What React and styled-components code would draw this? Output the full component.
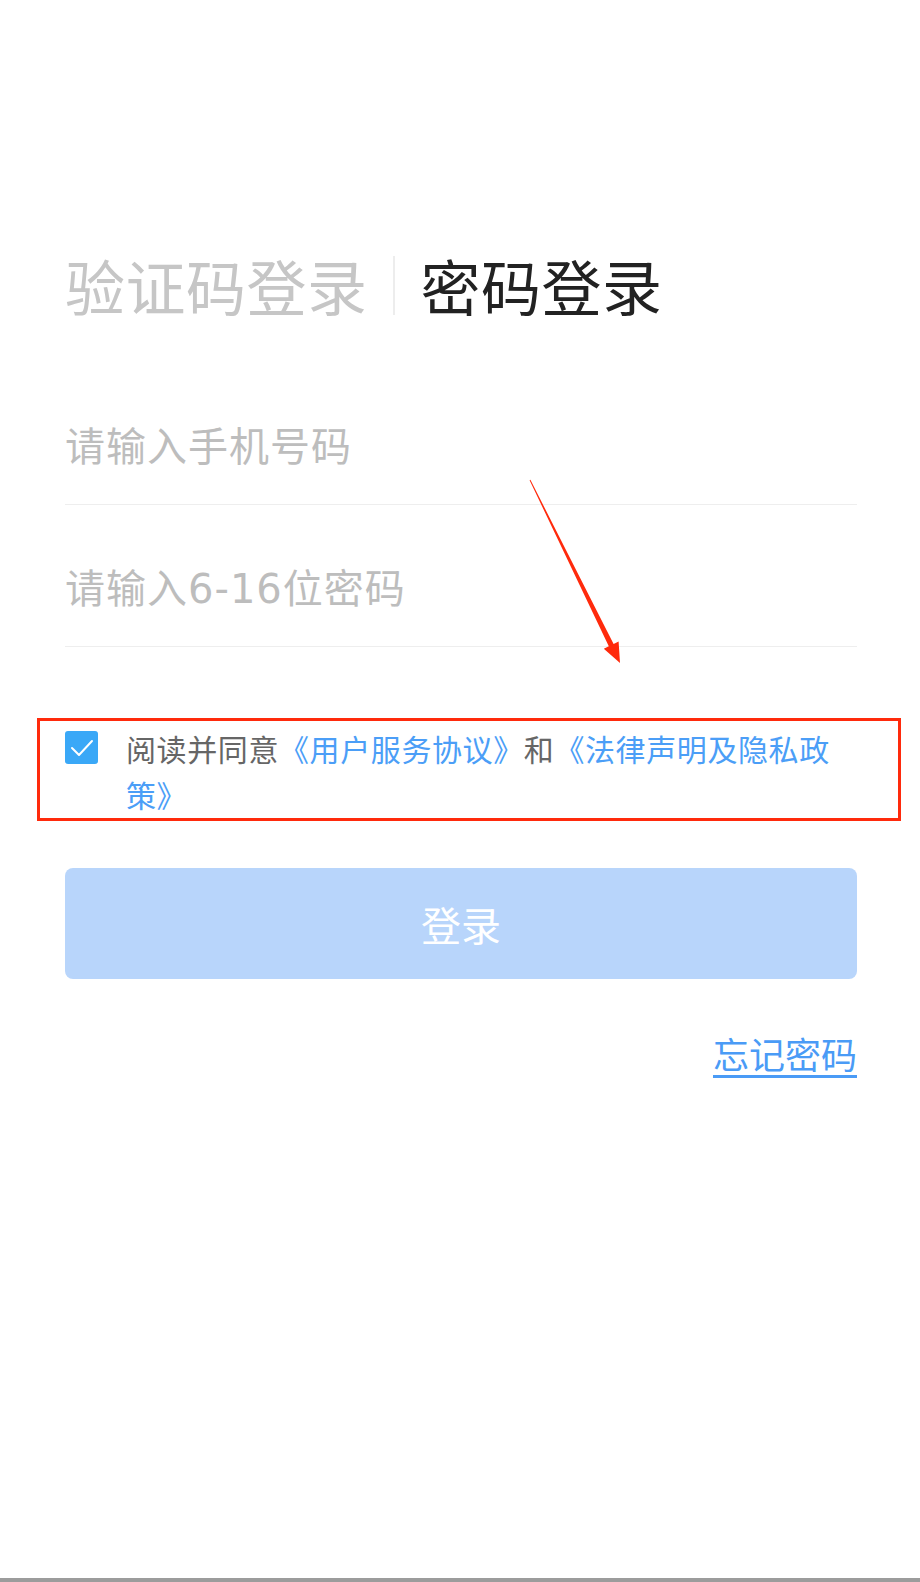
import { useState } from "react";
import styled, { createGlobalStyle } from "styled-components";

const GlobalStyle = createGlobalStyle`
  html, body {
    margin: 0;
    padding: 0;
    background: #fff;
  }

  body {
    font-family: "Noto Sans CJK SC", "Noto Sans", sans-serif;
  }
`;

const Page = styled.div`
  position: relative;
  min-height: 100vh;
  display: flex;
  flex-direction: column;
  background: #fff;
`;

const Content = styled.div`
  flex: 1;
  width: 792px;
  margin-left: 65px;
  padding-top: 245px;
`;

const Tabs = styled.div`
  display: flex;
  align-items: center;
  height: 80px;
  margin-bottom: 38px;
`;

const Tab = styled.button`
  border: none;
  background: none;
  padding: 0;
  font-family: inherit;
  font-size: 60px;
  letter-spacing: 0.5px;
  line-height: 80px;
  cursor: pointer;
  color: ${(props) => (props.isActive ? "#222" : "#c6c6c6")};
`;

const TabDivider = styled.span`
  width: 2px;
  height: 59px;
  margin: 0 26px 0 25px;
  background: #ededed;
`;

const Field = styled.div`
  padding: 56px 0 29px;
  border-bottom: 1px solid #eeeeee;
`;

const Input = styled.input`
  display: block;
  width: 100%;
  height: 56px;
  padding: 0;
  border: none;
  outline: none;
  font-family: "DejaVu Sans", "Noto Sans CJK SC", sans-serif;
  font-size: 40px;
  letter-spacing: 1px;
  color: #333;
  background: transparent;

  &::placeholder {
    color: #bdbdbd;
  }
`;

const Agreement = styled.div`
  position: relative;
  display: flex;
  align-items: flex-start;
  margin-top: 78px;
`;

const CheckBox = styled.span`
  flex: none;
  width: 33px;
  height: 33px;
  margin-top: 6px;
  margin-right: 28px;
  border-radius: 3px;
  display: flex;
  align-items: center;
  justify-content: center;
  cursor: pointer;
  background: ${(props) => (props.checked ? "#3aa8f7" : "#fff")};
  border: ${(props) => (props.checked ? "none" : "2px solid #ccc")};
  box-sizing: border-box;
`;

const AgreementText = styled.p`
  margin: 0;
  width: 716px;
  font-size: 30px;
  letter-spacing: 0.6px;
  line-height: 46px;
  color: #666;
`;

const Link = styled.a`
  color: ${(props) => props.color || "#4b9ef7"};
  text-decoration: ${(props) => (props.underline ? "underline" : "none")};
  text-underline-offset: 6px;
  cursor: pointer;
`;

const Highlight = styled.span`
  position: absolute;
  left: -28px;
  top: -7px;
  width: 864px;
  height: 103px;
  border: 3px solid #ff2a0c;
  box-sizing: border-box;
  pointer-events: none;
`;

const LoginButton = styled.button`
  display: block;
  width: 100%;
  height: 111px;
  margin-top: 51px;
  border: none;
  border-radius: 8px;
  background: #b8d5fb;
  color: #fff;
  font-family: inherit;
  font-size: 40px;
  cursor: pointer;
`;

const Footer = styled.div`
  display: flex;
  justify-content: flex-end;
  margin-top: 49px;
  font-size: 36px;
  line-height: 50px;
`;

const BottomBar = styled.div`
  height: 4px;
  background: #9c9c9c;
`;

const Arrow = styled.svg`
  position: absolute;
  left: 0;
  top: 0;
  pointer-events: none;
`;

const App = () => {
  const [mode, setMode] = useState("password");
  const [agreed, setAgreed] = useState(true);

  return (
    <Page>
      <GlobalStyle />
      <Content>
        <Tabs>
          <Tab isActive={mode === "code"} onClick={() => setMode("code")}>
            验证码登录
          </Tab>
          <TabDivider />
          <Tab isActive={mode === "password"} onClick={() => setMode("password")}>
            密码登录
          </Tab>
        </Tabs>

        <Field>
          <Input type="tel" placeholder="请输入手机号码" />
        </Field>
        <Field>
          <Input type="password" placeholder="请输入6-16位密码" />
        </Field>

        <Agreement>
          <CheckBox checked={agreed} onClick={() => setAgreed(!agreed)}>
            {agreed && (
              <svg width="24" height="18" viewBox="0 0 24 18" fill="none">
                <path
                  d="M2 9 L9 16 L22 2"
                  stroke="#fff"
                  strokeWidth="2"
                  strokeLinecap="round"
                  strokeLinejoin="round"
                />
              </svg>
            )}
          </CheckBox>
          <AgreementText>
            阅读并同意<Link>《用户服务协议》</Link>和<Link>《法律声明及隐私政策》</Link>
          </AgreementText>
          <Highlight />
        </Agreement>

        <LoginButton>登录</LoginButton>

        <Footer>
          <Link color="#4a9bf6" underline>
            忘记密码
          </Link>
        </Footer>
      </Content>
      <BottomBar />

      {/* annotation arrow */}
      <Arrow width="920" height="700" viewBox="0 0 920 700">
        <polygon
          points="529.6,480.2 530.4,479.8 613.6,644.0 618.6,641.4 620,663 603.8,648.8 608.8,646.2"
          fill="#ff2a0c"
        />
      </Arrow>
    </Page>
  );
};

export default App;
